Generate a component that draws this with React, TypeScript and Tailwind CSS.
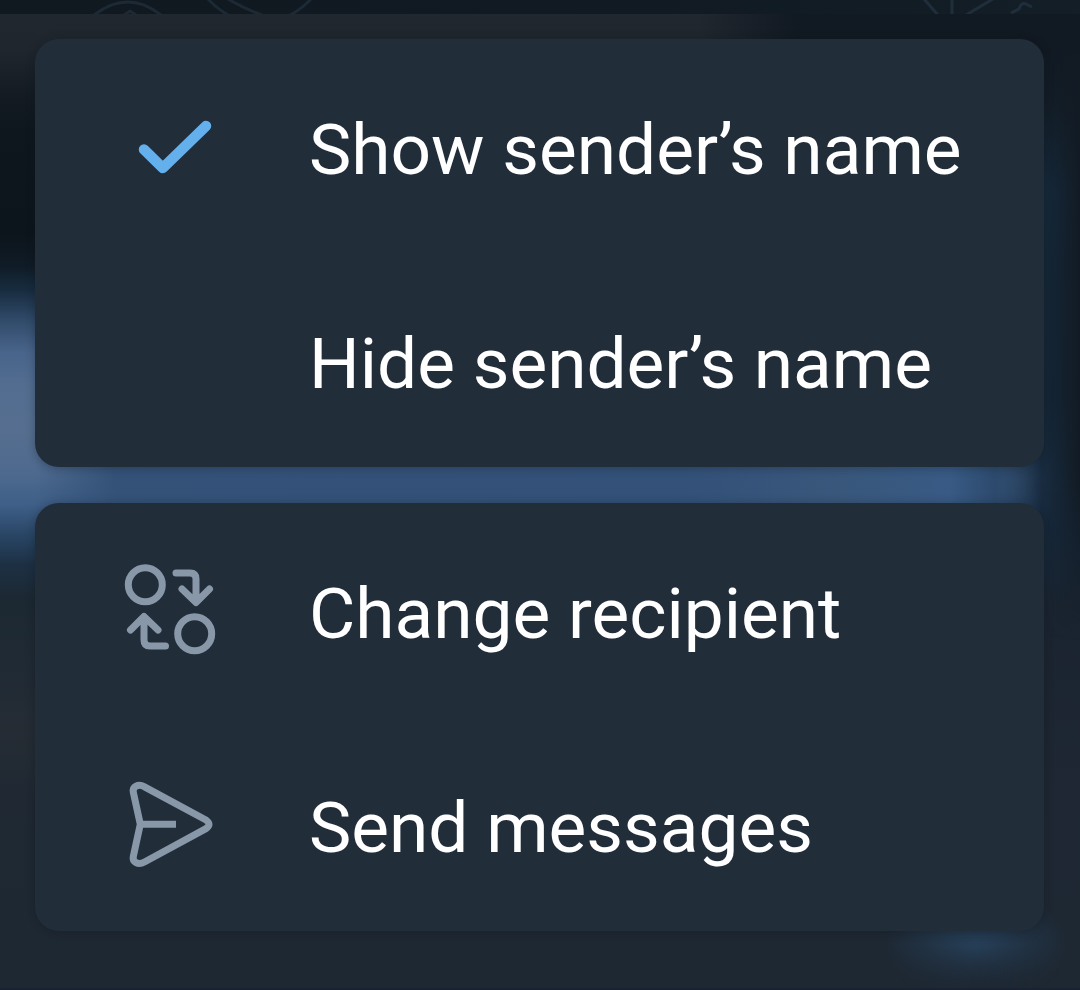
import type { ReactNode } from "react";

type MenuItem = {
    label: string;
    icon?: ReactNode;
}

function CheckIcon() {
    return (
        <svg viewBox="0 0 100 100" className="w-[100px] h-[100px]" fill="none" stroke="#64b0ed" strokeWidth="10.5" strokeLinecap="round" strokeLinejoin="round">
            <path d="M24 53.5 L42.8 72 L86 30" />
        </svg>
    )
}

function RecipientIcon() {
    return (
        <svg viewBox="0 0 100 100" className="w-[100px] h-[100px]" fill="none" stroke="#8998a8" strokeWidth="7" strokeLinecap="round" strokeLinejoin="round">
            <circle cx="25.3" cy="24.8" r="17" />
            <circle cx="74.7" cy="73.8" r="17" />
            <path d="M56 13 H70 Q76 13 76 19 V42 M62 29 L76 42.5 L89.5 29" />
            <path d="M45.5 86 H30 Q24 86 24 80 V57 M10.5 70 L24 56.5 L38 70" />
        </svg>
    )
}

function SendIcon() {
    return (
        <svg viewBox="0 0 100 100" className="w-[100px] h-[100px]" fill="none" stroke="#8998a8" strokeWidth="7" strokeLinejoin="round">
            <path d="M24.5 12.8 L86 46 Q92 50.3 86 54.6 L24.5 88 C18 91.5 12.2 88 13.3 82.5 L20.3 50.3 L13.3 18.2 C12.2 12.7 18 9.2 24.5 12.8 Z" />
            <path d="M20.3 50.3 H56" />
        </svg>
    )
}

const senderItems: MenuItem[] = [
    { label: "Show sender’s name", icon: <CheckIcon /> },
    { label: "Hide sender’s name" },
];

const actionItems: MenuItem[] = [
    { label: "Change recipient", icon: <RecipientIcon /> },
    { label: "Send messages", icon: <SendIcon /> },
];

function MenuCard({ items }: { items: MenuItem[] }) {
    return (
        <div className="rounded-[24px] bg-[#222d3a] shadow-[0_1px_10px_rgba(12,18,26,0.32)]">
            {items.map((item) => (
                <button key={item.label} className="flex h-[214px] w-full items-center gap-[89px] pl-[85px] text-left">
                    <span className="h-[100px] w-[100px] shrink-0">{item.icon}</span>
                    <span className="whitespace-nowrap pt-[7px] text-[71.2px] leading-[84px] text-white">
                        {item.label}
                    </span>
                </button>
            ))}
        </div>
    )
}

// Blurred chat behind the menu
function Backdrop() {
    return (
        <div className="absolute inset-0 overflow-hidden bg-[#1e2833]">
            <div className="absolute inset-0 bg-[linear-gradient(to_bottom,#21272f_14px,#1f262e_50px,#141b22_95px,#0f171e_130px,#0d151c_235px,#0f1b26_265px,#182c3f_290px,#304a69_320px,#48648a_352px,#526d90_385px,#566f90_430px,#4d698e_475px,#3f5f88_505px,#284463_537px,#1d3043_565px,#1c2832_600px,#1f2a34_660px,#252c34_730px,#1f2833_800px,#1e2833_990px)]" />
            {/* right margin */}
            <div className="absolute inset-y-0 right-0 w-[110px] bg-[linear-gradient(to_bottom,#111922_40px,#131d27_100px,#16293b_190px,#152737_280px,#152636_400px,#182b3f_480px,#17283a_530px,#1a2430_610px,#1e2733_800px,#1e2833_900px)] [mask-image:linear-gradient(to_right,transparent,black_70px)]" />
            {/* message bubble between the two cards */}
            <div className="absolute left-[35px] top-[440px] h-[90px] w-[1008px] bg-[linear-gradient(to_right,#3b5a8000,#345278_80px,#335179_650px,#39577b_800px,#385a84_915px,#2d4a6d_960px,#1d304800_1008px)]" />
            <div className="absolute right-0 top-0 h-[640px] w-[34px] bg-linear-to-r from-transparent to-[#121b24] [mask-image:linear-gradient(to_bottom,black_480px,transparent)]" />
            {/* strip above the first card */}
            <div className="absolute right-0 top-[14px] h-[40px] w-[380px] bg-linear-to-r from-[#11192200] to-[#111922] to-25%" />
            <div className="absolute left-[885px] top-[880px] h-[110px] w-[190px] bg-[radial-gradient(ellipse_at_48%_60%,#263f58,#263f5800_66%)] [mask-image:linear-gradient(to_bottom,black_60%,transparent)]" />
            <div className="absolute inset-x-0 top-0 h-[14px] bg-[linear-gradient(to_right,#101820,#111a22_60%,#131e27)]" />
            <svg viewBox="0 0 1080 14" className="absolute left-0 top-0 h-[14px] w-[1080px]" fill="none" stroke="#1b2a34" strokeWidth="3">
                <path d="M94 15 Q128 -11 161 15 M124 15 L130 11 L136 15" />
                <path d="M208 -1 Q216 8 228 15 M226 -2 Q245 9 262 15 M290 15 Q302 9 312 -2" />
                <path d="M924 -1 L938 15 M952 -1 V15 M966 15 L993 -1 M1011 13 L1019 9 Q1021 2 1026 4 L1032 7" stroke="#202e3c" />
            </svg>
            <div className="absolute inset-x-0 bottom-0 h-[2px] bg-[#192230]" />
        </div>
    )
}

export default function App() {
    return (
        <div className="relative h-[990px] w-[1080px] overflow-hidden font-[Roboto,sans-serif]">
            <Backdrop />
            <div className="relative flex flex-col gap-9 pt-[39px] pl-[35px] pr-[36px]">
                <MenuCard items={senderItems} />
                <MenuCard items={actionItems} />
            </div>
        </div>
    )
}
